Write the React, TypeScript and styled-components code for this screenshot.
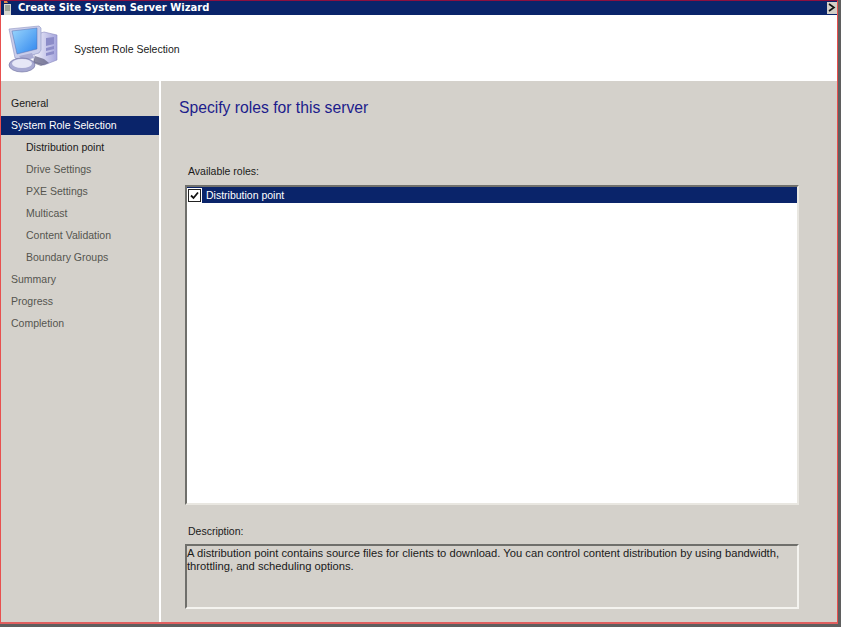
import styled, { createGlobalStyle } from 'styled-components';

const GlobalStyle = createGlobalStyle`
  html, body {
    margin: 0;
    padding: 0;
    background: #ffffff;
  }
  #root {
    width: 842px;
    height: 628px;
    overflow: hidden;
  }
`;

const Shadow = styled.div`
  width: 841px;
  height: 627px;
  box-sizing: border-box;
  padding: 0 3px 3px 0;
  background: #5f5f5f;
`;

const Frame = styled.div`
  height: 100%;
  box-sizing: border-box;
  display: flex;
  flex-direction: column;
  border: 1px solid #e8504f;
  border-top-color: #8c1040;
  border-bottom: 2px solid #e0605f;
  background: #d4d1cb;
  font-family: 'Liberation Sans', Arial, sans-serif;
  font-size: 10.5px;
  color: #1a1a1a;
`;

const TitleBar = styled.div`
  height: 14px;
  flex: none;
  display: flex;
  align-items: center;
  background: #0a246a;
  color: #ffffff;
  font-family: 'DejaVu Sans', Verdana, sans-serif;
  font-size: 10px;
  font-weight: 700;
`;

const TitleIcon = styled.svg`
  width: 13px;
  height: 14px;
  margin: 0 4px 0 0;
  flex: none;
`;

const TitleText = styled.span`
  flex: 1;
  line-height: 12px;
`;

const CloseButton = styled.div`
  width: 10px;
  height: 12px;
  margin: 0 0 1px;
  flex: none;
  background: #d4d0c8;
  display: flex;
  align-items: center;
  justify-content: center;
`;

const Banner = styled.div`
  height: 66px;
  flex: none;
  display: flex;
  align-items: center;
  background: #ffffff;
`;

const BannerIcon = styled.svg`
  width: 50px;
  height: 48px;
  margin: 1px 0 0 7px;
  flex: none;
`;

const BannerTitle = styled.span`
  margin: 2px 0 0 16px;
`;

const Body = styled.div`
  flex: 1;
  min-height: 0;
  display: flex;
`;

const Sidebar = styled.nav`
  width: 160px;
  flex: none;
  padding-top: 13px;
  box-sizing: border-box;
  border-right: 2px solid #ffffff;
  display: flex;
  flex-direction: column;
`;

const NavItem = styled.div<{ $selected?: boolean; $child?: boolean; $muted?: boolean }>`
  height: 19px;
  margin-bottom: 3px;
  line-height: 19px;
  padding-left: ${(props) => (props.$child ? '25px' : '10px')};
  background: ${(props) => (props.$selected ? '#0a246a' : 'transparent')};
  color: ${(props) => (props.$selected ? '#ffffff' : props.$muted ? '#55554f' : '#1a1a1a')};
`;

const Content = styled.main`
  flex: 1;
  min-width: 0;
  display: flex;
  flex-direction: column;
  padding: 0 38px 0 18px;
`;

const Heading = styled.h1`
  margin: 16px 0 0;
  font-weight: 400;
  font-size: 15.7px;
  line-height: 22px;
  color: #1c1c8c;
`;

const FieldLabel = styled.div<{ $top: number }>`
  margin: ${(props) => props.$top}px 0 0 9px;
  line-height: 14px;
  flex: none;
`;

const RoleList = styled.div`
  height: 320px;
  flex: none;
  margin: 7px 0 0 6px;
  box-sizing: border-box;
  background: #ffffff;
  border: 2px solid;
  border-color: #6f6f6b #e9e7e1 #e9e7e1 #6f6f6b;
`;

const RoleRow = styled.div`
  height: 16px;
  display: flex;
  align-items: center;
  background: #0a246a;
  color: #ffffff;
`;

const CheckBox = styled.span`
  width: 11px;
  height: 11px;
  margin: 0 5px 0 1px;
  flex: none;
  border: 1px solid #222222;
  outline: 1px solid #ffffff;
  background: #ffffff;
  display: flex;
  align-items: center;
  justify-content: center;
`;

const DescriptionBox = styled.div`
  height: 65px;
  flex: none;
  margin: 6px 0 0 6px;
  padding: 1px 0 0 0;
  box-sizing: border-box;
  border: 2px solid;
  border-color: #6f6f6b #f4f3ef #f4f3ef #6f6f6b;
  font-size: 11.2px;
  line-height: 13px;
`;

function ComputerIcon() {
  return (
    <BannerIcon viewBox="0 0 50 48">
      <defs>
        <linearGradient id="screen" x1="0" y1="0" x2="1" y2="1">
          <stop offset="0" stopColor="#9bd6fc" />
          <stop offset="1" stopColor="#2f86ee" />
        </linearGradient>
        <linearGradient id="tower" x1="0" y1="0" x2="1" y2="0">
          <stop offset="0" stopColor="#f4f4fc" />
          <stop offset="1" stopColor="#a4a4dc" />
        </linearGradient>
      </defs>
      <path d="M26 10l10-3 13 3v25l-13 5-10-3z" fill="url(#tower)" stroke="#8a8abf" strokeWidth="0.6" />
      <path d="M38 13l8-1v7l-8 2zM38 23l8-2v3l-8 2zM38 28l8-2v3l-8 2z" fill="#8c8cc8" />
      <path d="M27 31l9 3 5 4-8 3-8-3z" fill="#4a4a6a" opacity="0.6" />
      <path d="M1 4l30-3 2 2v22l-2 3-21 6-3-1z" fill="#c9cdea" stroke="#8f93c2" strokeWidth="0.6" />
      <path d="M4 6l25-3v21l-20 5z" fill="url(#screen)" stroke="#5a6fb0" strokeWidth="0.5" />
      <path d="M11 31l13-3 2 5-11 3z" fill="#a9abd3" />
      <ellipse cx="14" cy="40" rx="13" ry="7" fill="#a7a9d2" stroke="#6d6f9e" strokeWidth="0.6" />
      <ellipse cx="14" cy="38.5" rx="10" ry="4.5" fill="#e6e7f6" />
    </BannerIcon>
  );
}

function WindowIcon() {
  return (
    <TitleIcon viewBox="0 0 13 14">
      <path d="M3 0h3l1 2H3z" fill="#e08a4a" />
      <rect x="3" y="3" width="7" height="11" fill="#d8d8d0" />
      <path d="M4 5h5M4 7h5M4 9h5" stroke="#5d6b5d" />
    </TitleIcon>
  );
}

const navItems = [
  { label: 'General' },
  { label: 'System Role Selection', selected: true },
  { label: 'Distribution point', child: true },
  { label: 'Drive Settings', child: true, muted: true },
  { label: 'PXE Settings', child: true, muted: true },
  { label: 'Multicast', child: true, muted: true },
  { label: 'Content Validation', child: true, muted: true },
  { label: 'Boundary Groups', child: true, muted: true },
  { label: 'Summary', muted: true },
  { label: 'Progress', muted: true },
  { label: 'Completion', muted: true },
];

export default function App() {
  return (
    <>
      <GlobalStyle />
      <Shadow>
        <Frame>
          <TitleBar>
            <WindowIcon />
            <TitleText>Create Site System Server Wizard</TitleText>
            <CloseButton>
              <svg width="8" height="9" viewBox="0 0 8 9">
                <path d="M1 1l5 3.5L1 8" fill="none" stroke="#111111" strokeWidth="1.6" />
              </svg>
            </CloseButton>
          </TitleBar>
          <Banner>
            <ComputerIcon />
            <BannerTitle>System Role Selection</BannerTitle>
          </Banner>
          <Body>
            <Sidebar>
              {navItems.map((item) => (
                <NavItem
                  key={item.label}
                  $selected={item.selected}
                  $child={item.child}
                  $muted={item.muted}
                >
                  {item.label}
                </NavItem>
              ))}
            </Sidebar>
            <Content>
              <Heading>Specify roles for this server</Heading>
              <FieldLabel $top={45}>Available roles:</FieldLabel>
              <RoleList>
                <RoleRow>
                  <CheckBox>
                    <svg width="9" height="9" viewBox="0 0 9 9">
                      <path d="M1 4.5l2.5 2.5L8 1.5" fill="none" stroke="#111111" strokeWidth="1.8" />
                    </svg>
                  </CheckBox>
                  Distribution point
                </RoleRow>
              </RoleList>
              <FieldLabel $top={19}>Description:</FieldLabel>
              <DescriptionBox>
                A distribution point contains source files for clients to download. You can control
                content distribution by using bandwidth, throttling, and scheduling options.
              </DescriptionBox>
            </Content>
          </Body>
        </Frame>
      </Shadow>
    </>
  );
}
